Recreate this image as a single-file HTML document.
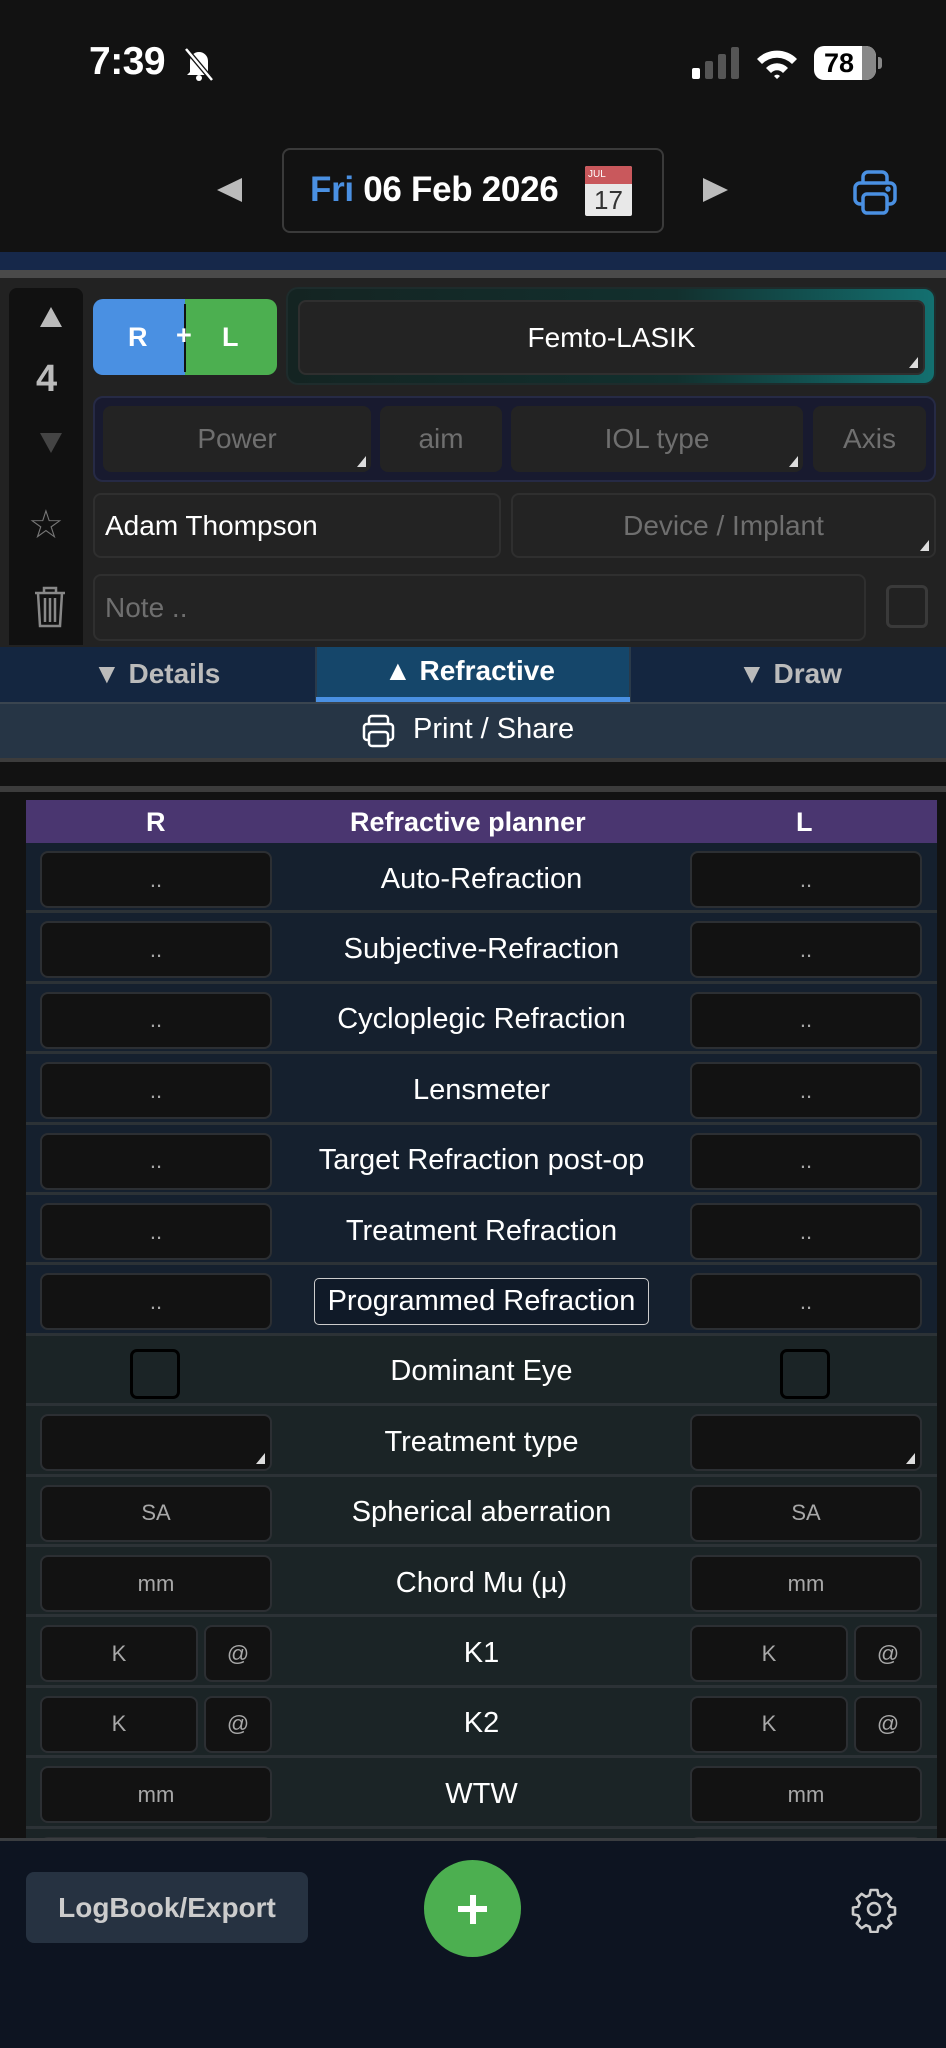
<!DOCTYPE html>
<html><head><meta charset="utf-8"><style>
*{box-sizing:border-box;margin:0;padding:0}
body{width:946px;height:2048px;background:#121212;font-family:"Liberation Sans",sans-serif;position:relative;overflow:hidden;color:#fff}
.a{position:absolute}
.inp{position:absolute;background:#232323;border:2px solid #2f2f2f;border-radius:8px;color:#6f6f6f;font-size:28px;display:flex;align-items:center;justify-content:center}
.tri{position:absolute;right:5px;bottom:5px;width:0;height:0;border-left:9px solid transparent;border-bottom:11px solid #ddd}
.row{position:absolute;left:26px;width:911px;height:70.4px;border-bottom:3px solid #2c3236}
.cell{position:absolute;top:8px;height:57px;background:#121212;border:2px solid #2c2f33;border-radius:8px;color:#a8a8a8;font-size:22px;display:flex;align-items:center;justify-content:center}
.lab{position:absolute;left:250px;width:411px;top:2px;height:68px;display:flex;align-items:center;justify-content:center;font-size:29px;color:#fff}
</style></head><body>
<!-- status bar -->
<div class="a" style="left:89px;top:40px;font-size:39px;font-weight:bold;letter-spacing:-0.5px">7:39</div>
<svg class="a" style="left:182px;top:46px" width="34" height="36" viewBox="0 0 34 36"><path d="M8 26 L8 15 A9 9 0 0 1 26 15 L26 26 L29 29 L5 29 Z" fill="#fff"/><circle cx="17" cy="32" r="3" fill="#fff"/><line x1="4" y1="3" x2="30" y2="34" stroke="#121212" stroke-width="5"/><line x1="4" y1="3" x2="30" y2="34" stroke="#fff" stroke-width="2.5"/></svg>
<div class="a" style="left:692px;top:68px;width:8px;height:11px;background:#fff;border-radius:2px"></div>
<div class="a" style="left:705px;top:61px;width:8px;height:18px;background:#555;border-radius:2px"></div>
<div class="a" style="left:718px;top:54px;width:8px;height:25px;background:#555;border-radius:2px"></div>
<div class="a" style="left:731px;top:47px;width:8px;height:32px;background:#555;border-radius:2px"></div>
<svg class="a" style="left:755px;top:47px" width="44" height="33" viewBox="0 0 44 33"><path d="M2 12 A28 28 0 0 1 42 12 L37 17 A21 21 0 0 0 7 17Z M11 21 A15 15 0 0 1 33 21 L28 26 A8 8 0 0 0 16 26Z M19 29 A4 4 0 0 1 25 29 L22 32Z" fill="#fff"/></svg>
<div class="a" style="left:814px;top:46px;width:62px;height:34px;background:#fff;border-radius:10px;overflow:hidden"><div class="a" style="left:48px;top:0;width:14px;height:34px;background:#888"></div><div class="a" style="left:0;top:0;width:50px;text-align:center;color:#000;font-weight:bold;font-size:27px;line-height:34px">78</div></div>
<div class="a" style="left:878px;top:57px;width:4px;height:12px;background:#888;border-radius:0 3px 3px 0"></div>
<!-- date row -->
<div class="a" style="left:217px;top:178px;width:0;height:0;border-top:12px solid transparent;border-bottom:12px solid transparent;border-right:25px solid #bbb"></div>
<div class="a" style="left:282px;top:148px;width:382px;height:85px;border:2px solid #3a3a3a;border-radius:8px"></div>
<div class="a" style="left:310px;top:170px;font-size:35px;font-weight:bold;letter-spacing:-0.3px"><span style="color:#4a90e2">Fri</span> 06 Feb 2026</div>
<div class="a" style="left:585px;top:166px;width:47px;height:50px;background:#e8e8e8;border-radius:2px;overflow:hidden"><div style="height:18px;background:#c9585c;font-size:10px;padding-left:3px;line-height:18px">JUL</div><div style="color:#333;font-size:26px;text-align:center;line-height:32px">17</div></div>
<div class="a" style="left:703px;top:178px;width:0;height:0;border-top:12px solid transparent;border-bottom:12px solid transparent;border-left:25px solid #bbb"></div>
<svg class="a" style="left:853px;top:169px" width="44" height="46" viewBox="0 0 44 46" fill="none" stroke="#4a90e2" stroke-width="3.5" stroke-linejoin="round"><path d="M10 14 V8 a5 5 0 0 1 5-5 h14 a5 5 0 0 1 5 5 v6"/><path d="M10 35 H7 a5 5 0 0 1-5-5 V19 a5 5 0 0 1 5-5 h30 a5 5 0 0 1 5 5 v11 a5 5 0 0 1-5 5 h-3"/><rect x="10" y="25" width="24" height="19" rx="4"/><circle cx="35" cy="20" r="1" fill="#4a90e2"/></svg>
<!-- stripes -->
<div class="a" style="left:0;top:252px;width:946px;height:18px;background:#16284a"></div>
<div class="a" style="left:0;top:270px;width:946px;height:8px;background:#4a4a4a"></div>
<!-- panel -->
<div class="a" style="left:0;top:278px;width:946px;height:369px;background:#222"></div>
<div class="a" style="left:9px;top:288px;width:74px;height:357px;background:#111;border-radius:8px 8px 0 0"></div>
<div class="a" style="left:40px;top:307px;width:0;height:0;border-left:11px solid transparent;border-right:11px solid transparent;border-bottom:20px solid #bbb"></div>
<div class="a" style="left:36px;top:358px;font-size:38px;font-weight:bold;color:#bbb">4</div>
<div class="a" style="left:40px;top:433px;width:0;height:0;border-left:11px solid transparent;border-right:11px solid transparent;border-top:20px solid #444"></div>
<div class="a" style="left:28px;top:502px;font-size:40px;color:#777">☆</div>
<svg class="a" style="left:33px;top:585px" width="34" height="44" viewBox="0 0 34 44" fill="none" stroke="#888" stroke-width="2.5"><path d="M2 8 H32 M11 8 V3 H23 V8 M5 8 L7 41 H27 L29 8 M12 13 V37 M17 13 V37 M22 13 V37"/></svg>
<div class="a" style="left:93px;top:299px;width:92px;height:76px;background:#4a90e2;border-radius:10px 0 0 10px"></div>
<div class="a" style="left:185px;top:299px;width:92px;height:76px;background:#4caf50;border-radius:0 10px 10px 0"></div>
<div class="a" style="left:184px;top:304px;width:2px;height:68px;background:#111"></div>
<div class="a" style="left:128px;top:322px;font-size:27px;font-weight:bold">R</div>
<div class="a" style="left:176px;top:320px;font-size:27px;font-weight:bold">+</div>
<div class="a" style="left:222px;top:322px;font-size:27px;font-weight:bold">L</div>
<div class="a" style="left:286px;top:287px;width:650px;height:98px;border-radius:12px;background:linear-gradient(90deg,#142422,#12302e 60%,#137070);border:2px solid #1e2c2c"></div>
<div class="inp" style="left:298px;top:300px;width:627px;height:75px;color:#fff;font-size:28px">Femto-LASIK<div class="tri"></div></div>
<div class="a" style="left:93px;top:396px;width:843px;height:86px;background:#181a2f;border:2px solid #262a45;border-radius:10px"></div>
<div class="inp" style="left:103px;top:406px;width:268px;height:66px;border:none">Power<div class="tri"></div></div>
<div class="inp" style="left:380px;top:406px;width:122px;height:66px;border:none">aim</div>
<div class="inp" style="left:511px;top:406px;width:292px;height:66px;border:none">IOL type<div class="tri"></div></div>
<div class="inp" style="left:813px;top:406px;width:113px;height:66px;border:none">Axis</div>
<div class="inp" style="left:93px;top:493px;width:408px;height:65px;color:#fff;justify-content:flex-start;padding-left:10px;font-size:28px">Adam Thompson</div>
<div class="inp" style="left:511px;top:493px;width:425px;height:65px">Device / Implant<div class="tri"></div></div>
<div class="inp" style="left:93px;top:574px;width:773px;height:67px;justify-content:flex-start;padding-left:10px;font-size:28px">Note ..</div>
<div class="a" style="left:886px;top:585px;width:42px;height:43px;border:3px solid #3a3a3a;border-radius:6px"></div>
<!-- tabs -->
<div class="a" style="left:0;top:647px;width:946px;height:55px;background:#142640"></div>
<div class="a" style="left:315px;top:647px;width:316px;height:55px;background:#15466a;border-left:2px solid #2a3a4a;border-right:2px solid #2a3a4a"></div>
<div class="a" style="left:316px;top:697px;width:314px;height:5px;background:#4a90e2"></div>
<div class="a" style="left:93px;top:658px;font-size:28px;color:#bbb;font-weight:bold">▼ Details</div>
<div class="a" style="left:384px;top:655px;font-size:28px;color:#fff;font-weight:bold">▲ Refractive</div>
<div class="a" style="left:738px;top:658px;font-size:28px;color:#bbb;font-weight:bold">▼ Draw</div>
<div class="a" style="left:0;top:702px;width:946px;height:56px;background:#263545;border-top:2px solid #3a4550"></div>
<svg class="a" style="left:362px;top:714px" width="33" height="34" viewBox="0 0 33 34" fill="none" stroke="#fff" stroke-width="2.5"><path d="M7 10 V5 a3 3 0 0 1 3-3 h13 a3 3 0 0 1 3 3 v5"/><path d="M7 26 H5 a3 3 0 0 1-3-3 V13 a3 3 0 0 1 3-3 h23 a3 3 0 0 1 3 3 v10 a3 3 0 0 1-3 3 h-2"/><rect x="7" y="18" width="19" height="14" rx="3"/></svg>
<div class="a" style="left:413px;top:713px;font-size:29px">Print / Share</div>
<div class="a" style="left:0;top:758px;width:946px;height:4px;background:#3c3c3c"></div>
<div class="a" style="left:0;top:786px;width:946px;height:6px;background:#3c3c3c"></div>
<!-- table -->
<div class="a" style="left:26px;top:800px;width:911px;height:43px;background:#4a3670;font-weight:bold;font-size:27px">
<div class="a" style="left:120px;top:7px">R</div><div class="a" style="left:324px;top:7px">Refractive planner</div><div class="a" style="left:770px;top:7px">L</div></div>
<div class="a" style="left:26px;top:843px;width:911px;height:995px;overflow:hidden">
<div style="position:relative">
<div class="row" style="left:0;top:0;background:#15202e"><div class="cell" style="left:14px;width:232px">..</div><div class="lab">Auto-Refraction</div><div class="cell" style="left:664px;width:232px">..</div></div>
<div class="row" style="left:0;top:70.4px;background:#15202e"><div class="cell" style="left:14px;width:232px">..</div><div class="lab">Subjective-Refraction</div><div class="cell" style="left:664px;width:232px">..</div></div>
<div class="row" style="left:0;top:140.8px;background:#15202e"><div class="cell" style="left:14px;width:232px">..</div><div class="lab">Cycloplegic Refraction</div><div class="cell" style="left:664px;width:232px">..</div></div>
<div class="row" style="left:0;top:211.2px;background:#15202e"><div class="cell" style="left:14px;width:232px">..</div><div class="lab">Lensmeter</div><div class="cell" style="left:664px;width:232px">..</div></div>
<div class="row" style="left:0;top:281.6px;background:#15202e"><div class="cell" style="left:14px;width:232px">..</div><div class="lab">Target Refraction post-op</div><div class="cell" style="left:664px;width:232px">..</div></div>
<div class="row" style="left:0;top:352px;background:#15202e"><div class="cell" style="left:14px;width:232px">..</div><div class="lab">Treatment Refraction</div><div class="cell" style="left:664px;width:232px">..</div></div>
<div class="row" style="left:0;top:422.4px;background:#15202e"><div class="cell" style="left:14px;width:232px">..</div><div class="lab"><span style="border:1.5px solid #ccc;border-radius:5px;padding:6px 13px;background:#101a28">Programmed Refraction</span></div><div class="cell" style="left:664px;width:232px">..</div></div>
<div class="row" style="left:0;top:492.8px;background:#1b2426"><div class="a" style="left:104px;top:13px;width:50px;height:50px;border:3px solid #000;border-radius:7px"></div><div class="lab">Dominant Eye</div><div class="a" style="left:754px;top:13px;width:50px;height:50px;border:3px solid #000;border-radius:7px"></div></div>
<div class="row" style="left:0;top:563.2px;background:#1b2426"><div class="cell" style="left:14px;width:232px"><div class="tri"></div></div><div class="lab">Treatment type</div><div class="cell" style="left:664px;width:232px"><div class="tri"></div></div></div>
<div class="row" style="left:0;top:633.6px;background:#1b2426"><div class="cell" style="left:14px;width:232px">SA</div><div class="lab">Spherical aberration</div><div class="cell" style="left:664px;width:232px">SA</div></div>
<div class="row" style="left:0;top:704px;background:#1b2426"><div class="cell" style="left:14px;width:232px">mm</div><div class="lab">Chord Mu (µ)</div><div class="cell" style="left:664px;width:232px">mm</div></div>
<div class="row" style="left:0;top:774.4px;background:#1b2426"><div class="cell" style="left:14px;width:158px">K</div><div class="cell" style="left:178px;width:68px">@</div><div class="lab">K1</div><div class="cell" style="left:664px;width:158px">K</div><div class="cell" style="left:828px;width:68px">@</div></div>
<div class="row" style="left:0;top:844.8px;background:#1b2426"><div class="cell" style="left:14px;width:158px">K</div><div class="cell" style="left:178px;width:68px">@</div><div class="lab">K2</div><div class="cell" style="left:664px;width:158px">K</div><div class="cell" style="left:828px;width:68px">@</div></div>
<div class="row" style="left:0;top:915.2px;background:#1b2426"><div class="cell" style="left:14px;width:232px">mm</div><div class="lab">WTW</div><div class="cell" style="left:664px;width:232px">mm</div></div>
<div class="row" style="left:0;top:985.6px;background:#1b2426"><div class="cell" style="left:14px;width:232px"></div><div class="cell" style="left:664px;width:232px"></div></div>
</div></div>
<!-- footer -->
<div class="a" style="left:0;top:1838px;width:946px;height:210px;background:#0d1421;border-top:3px solid #3a3d40"></div>
<div class="a" style="left:26px;top:1872px;width:282px;height:71px;background:#263241;border-radius:8px;color:#ccc;font-size:28px;font-weight:bold;display:flex;align-items:center;justify-content:center">LogBook/Export</div>
<div class="a" style="left:424px;top:1860px;width:97px;height:97px;background:#4caf50;border-radius:50%"></div>
<div class="a" style="left:458px;top:1906px;width:29px;height:6px;background:#fff"></div>
<div class="a" style="left:469.5px;top:1894.5px;width:6px;height:29px;background:#fff"></div>
<svg class="a" style="left:850px;top:1885px" width="48" height="48" viewBox="0 0 24 24" fill="none" stroke="#ccc" stroke-width="1.3" stroke-linejoin="round"><path d="M10.3 2.5h3.4l.5 2.6 1.8.8 2.2-1.5 2.4 2.4-1.5 2.2.8 1.8 2.6.5v3.4l-2.6.5-.8 1.8 1.5 2.2-2.4 2.4-2.2-1.5-1.8.8-.5 2.6h-3.4l-.5-2.6-1.8-.8-2.2 1.5-2.4-2.4 1.5-2.2-.8-1.8-2.6-.5v-3.4l2.6-.5.8-1.8-1.5-2.2 2.4-2.4 2.2 1.5 1.8-.8z"/><circle cx="12" cy="12" r="3"/></svg>
</body></html>
